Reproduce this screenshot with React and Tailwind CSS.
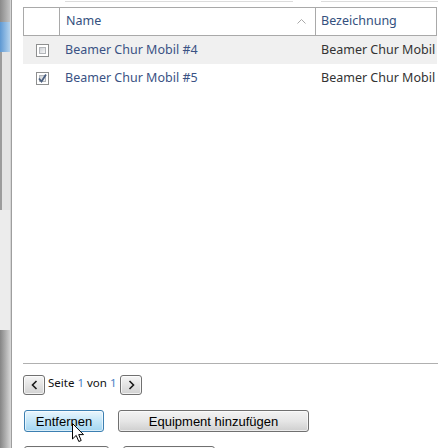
import React from 'react';

const ui = "font-['Noto_Sans',sans-serif] font-normal";
const btnFont = "font-['Liberation_Sans',Arial,sans-serif] text-[13px] text-black leading-none";

function Checkbox({ checked }) {
  return (
    <div className="relative w-[13px] h-[13px] border border-[#8e8f8f] bg-white p-[2px]">
      <div className="w-full h-full border border-[#b3b6ba] bg-linear-to-br from-[#cfd2d7] to-[#f7f7f7]" />
      {checked && (
        <svg className="absolute left-0 top-0" width="11" height="11" viewBox="0 0 11 11">
          <path d="M2 5.5 L4.5 8.5 L9 1.5" fill="none" stroke="#4a5f80" strokeWidth="1.8" />
        </svg>
      )}
    </div>
  );
}

function PageButton({ dir }) {
  return (
    <div className="w-[22px] h-[20px] shrink-0 rounded-[3px] border border-[#707070] bg-linear-to-b from-[#f6f6f6] to-[#d2d2d2] shadow-[inset_0_0_0_1px_rgba(255,255,255,0.7)] flex items-center justify-center">
      <svg width="7" height="10" viewBox="0 0 7 10">
        <polyline
          points={dir === 'left' ? '5.5,1 1.5,5 5.5,9' : '1.5,1 5.5,5 1.5,9'}
          fill="none"
          stroke="#1a1a1a"
          strokeWidth="1.6"
        />
      </svg>
    </div>
  );
}

function Button({ children, width, blue }) {
  return (
    <div
      className={`${width} h-[22px] shrink-0 rounded-[3px] border flex items-center justify-center shadow-[inset_0_0_0_1px_rgba(255,255,255,0.6)] ${btnFont} ${
        blue
          ? 'border-[#3c7fb1] bg-linear-to-b from-[#eaf6fd] via-[#c4e6f8] to-[#a3d5f1]'
          : 'border-[#707070] bg-linear-to-b from-[#f3f3f3] via-[#e6e6e6] to-[#cfcfcf]'
      }`}
    >
      {children}
    </div>
  );
}

const rows = [
  { name: 'Beamer Chur Mobil #4', label: 'Beamer Chur Mobil', checked: false },
  { name: 'Beamer Chur Mobil #5', label: 'Beamer Chur Mobil', checked: true },
];

export default function App() {
  return (
    <div className="relative flex w-[438px] h-[448px] overflow-hidden bg-white">
      {/* window edge on the left */}
      <div className="flex shrink-0">
        <div className="w-[10px] flex flex-col">
          <div className="h-[22px] shrink-0 bg-linear-to-r from-[#8a8a8a] to-[#c4c4c4]" />
          <div className="h-[30px] shrink-0 bg-linear-to-r from-[#5d98d2] to-[#b4d3ee]" />
          <div className="h-[158px] shrink-0 bg-[#e4e4e4] border-l-2 border-[#9c9c9c]" />
          <div className="h-[120px] shrink-0 bg-[#ececec]" />
          <div className="flex-1 bg-linear-to-r from-[#858585] to-[#d2d2d2]" />
        </div>
        <div className="w-px bg-[#d4d4d4]" />
        <div className="w-px bg-[#9e9e9e]" />
      </div>

      <div className={`flex-1 flex flex-col pl-[11px] pr-px ${ui}`}>
        {/* bottom of the fields above */}
        <div className="h-[7px] shrink-0 flex">
          <div className="ml-[42px] w-[228px] h-[2px] border-b border-[#dcdcdc]" />
          <div className="ml-[28px] flex-1 h-[2px] border-b border-[#dcdcdc] -mr-px" />
        </div>

        {/* table header */}
        <div className="flex h-[29px] shrink-0 border border-[#a9a9a9] text-[12.5px] text-[#34507e]">
          <div className="w-[36px] border-r border-[#a9a9a9]" />
          <div className="flex-1 flex items-center justify-between pl-[6px] pr-[9px] border-r border-[#a9a9a9]">
            <span>Name</span>
            <svg width="9" height="5" viewBox="0 0 9 5">
              <polyline points="0.5,4.5 4.5,0.5 8.5,4.5" fill="none" stroke="#a8a8a8" strokeWidth="1" />
            </svg>
          </div>
          <div className="w-[120px] flex items-center pl-[5px]">Bezeichnung</div>
        </div>

        {/* rows */}
        <div className="h-[327px] shrink-0 flex flex-col">
          {rows.map((r, i) => (
            <div
              key={r.name}
              className={`flex h-[28px] shrink-0 items-center text-[12.5px] ${i === 0 ? 'bg-[#f0f0f0]' : ''}`}
            >
              <div className="w-[37px] pl-[13px] flex items-center">
                <Checkbox checked={r.checked} />
              </div>
              <div className="flex-1 pl-[5px] text-[#3a5284] whitespace-nowrap">{r.name}</div>
              <div className="w-[116px] text-[#333] whitespace-nowrap overflow-hidden">{r.label}</div>
            </div>
          ))}
        </div>

        <div className="shrink-0 border-t border-[#b0b0b0] -mr-px" />

        {/* paging */}
        <div className="mt-[11px] shrink-0 flex items-center h-[20px]">
          <PageButton dir="left" />
          <div className="ml-[3px] mr-[4px] mb-[5px] text-[11.5px] text-[#111] whitespace-nowrap">
            Seite <span className="text-[#4a80c4]">1</span> von <span className="text-[#4a80c4]">1</span>
          </div>
          <PageButton dir="right" />
        </div>

        {/* actions */}
        <div className="mt-[15px] shrink-0 flex gap-[14px] pl-px">
          <Button width="w-[80px]" blue>Entfernen</Button>
          <Button width="w-[191px]">Equipment hinzufügen</Button>
        </div>
        {/* next button row, only its top edge is in view */}
        <div className="mt-[14px] shrink-0 flex gap-[14px] pl-px">
          <Button width="w-[85px]" />
          <Button width="w-[92px]" />
        </div>
      </div>

      {/* mouse pointer */}
      <svg className="absolute left-[72px] top-[423px]" width="13" height="20" viewBox="0 0 13 20">
        <path
          d="M0.5 0.5 L0.5 16 L4.2 12.4 L6.8 18.5 L9.2 17.5 L6.7 11.6 L11.5 11.6 Z"
          fill="#fff"
          stroke="#000"
          strokeWidth="1"
          strokeLinejoin="round"
        />
      </svg>
    </div>
  );
}
